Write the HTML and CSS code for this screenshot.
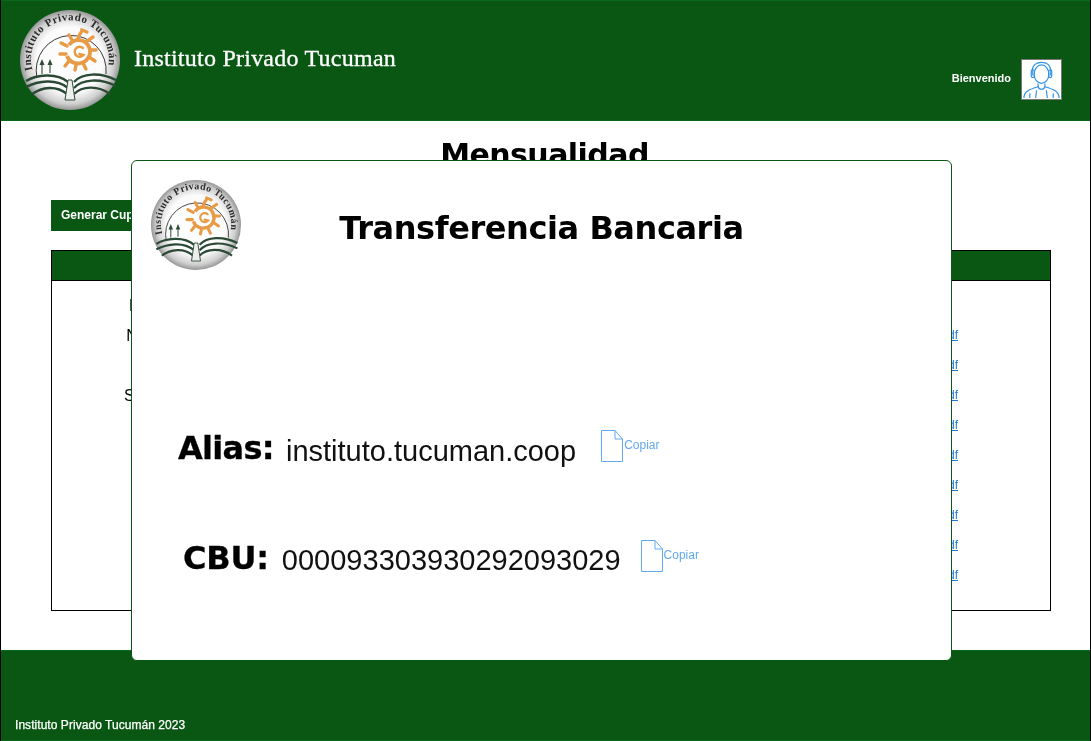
FILE: index.html
```html
<!DOCTYPE html>
<html lang="es">
<head>
<meta charset="utf-8">
<title>Instituto Privado Tucuman</title>
<link rel="stylesheet" href="styles.css">
</head>
<body>
<svg class="defs" width="0" height="0" aria-hidden="true">
  <defs>
    <radialGradient id="disk" cx="50%" cy="50%" r="50%">
      <stop offset="0" stop-color="#ffffff"/>
      <stop offset="0.66" stop-color="#fbfbfb"/>
      <stop offset="0.88" stop-color="#cfcfcf"/>
      <stop offset="1" stop-color="#969696"/>
    </radialGradient>
    <path id="arc" d="M12.500 60 A39 39 0 1 1 88 58"/>
    <symbol id="logo" viewBox="0 0 100 100">
      <circle cx="50" cy="50" r="50" fill="url(#disk)"/>
      <path d="M17 68 A35 35 0 1 1 86 64" fill="none" stroke="#222" stroke-width="0.9"/>
      <text class="logo-text"><textPath href="#arc" startOffset="0" textLength="139" lengthAdjust="spacing">Instituto Privado  Tucumán</textPath></text>
      <g fill="none" stroke="#e89a45">
        <path stroke-width="2.400" stroke-linecap="round" d="M63 38 A5 5 0 1 0 63.500 45 L59.500 44"/>
        <path stroke-width="3.800" d="M49 35 A11.500 11.500 0 0 1 69 37 A11.500 11.500 0 0 1 61 53 A11.500 11.500 0 0 1 47 46"/>
        <path stroke-width="3.400" stroke-linecap="round" d="M52 30 L49 25 M58 29 C58 24 61 25 62 20 L67 22 M66 32 L73 27 M70 40 L76 40 M69 47 L75 51 M63 53 L66 59 M56 55 L55 60 M49 51 L45 56 M46 44 L40 44 M47 36 L41 33"/>
      </g>
      <g fill="#2f4a36" stroke="#2f4a36">
        <path fill="none" stroke-width="1.100" d="M22 64 V54 M30 63 V54"/>
        <path stroke="none" d="M22 49 L24.500 55 H19.500 Z M30 49 L32.500 55 H27.500 Z"/>
      </g>
      <g fill="none" stroke="#2b4a35" stroke-width="2.400">
        <path d="M6 71 C16 65 36 62 48 72"/>
        <path d="M6 77 C18 71 36 68 48 78"/>
        <path d="M12 84 C22 77 36 75 47 84"/>
        <path d="M54 72 C62 63 80 62 96 70"/>
        <path d="M54 78 C62 69 80 68 96 76"/>
        <path d="M54 84 C62 76 78 75 90 84"/>
      </g>
      <path d="M48 70 L45 90 H55 L52 70 Z" fill="#eeeeee" stroke="#2b4a35" stroke-width="1"/>
    </symbol>
    <symbol id="file" viewBox="0 0 22 32">
      <path d="M.5 .5 H14 L21.500 9 V31.500 H.5 Z M14 .5 V9 H21.500" fill="none" stroke="#62a9ee" stroke-width="1"/>
    </symbol>
  </defs>
</svg>

<div class="page">
  <header class="top">
    <div class="brand">
      <svg class="logo-main"><use href="#logo"/></svg>
      <span class="brand-name">Instituto Privado Tucuman</span>
    </div>
    <div class="user">
      <span class="welcome">Bienvenido</span>
      <span class="avatar">
        <svg viewBox="0 0 40 40" width="39" height="39" fill="none" stroke="#2f92e6" stroke-width="1.200">
          <ellipse cx="20" cy="14.500" rx="7.500" ry="9.500"/>
          <path d="M10.500 16 V11 C10.500 5 15 2.500 20 2.500 S29.500 5 29.500 11 V16"/>
          <rect x="9.500" y="10" width="3" height="8" rx="1.500"/>
          <rect x="27.500" y="10" width="3" height="8" rx="1.500"/>
          <path d="M16.500 24 V27 C17 31 23 31 23.500 27 V24"/>
          <path d="M2 39 C2 32 8 30 16.500 27.500 M38 39 C38 32 32 30 23.500 27.500"/>
          <path d="M8 39 V34 M32 39 V34 M15 31 L14 39 M25 31 L26 39"/>
        </svg>
      </span>
    </div>
  </header>

  <main class="content">
    <h1 class="page-title">Mensualidad</h1>
    <div class="actions"><button class="btn" type="button">Generar Cupón de Pago</button></div>
    <section class="table">
      <div class="thead"><span class="th-month">Mes</span></div>
      <div class="tbody">
        <div class="row"><span class="month">Diciembre</span></div>
        <div class="row"><span class="month">Noviembre</span><a class="pdf" href="#">cupon.pdf</a></div>
        <div class="row"><span class="month">Octubre</span><a class="pdf" href="#">cupon.pdf</a></div>
        <div class="row"><span class="month">Septiembre</span><a class="pdf" href="#">cupon.pdf</a></div>
        <div class="row"><span class="month">Agosto</span><a class="pdf" href="#">cupon.pdf</a></div>
        <div class="row"><span class="month">Julio</span><a class="pdf" href="#">cupon.pdf</a></div>
        <div class="row"><span class="month">Junio</span><a class="pdf" href="#">cupon.pdf</a></div>
        <div class="row"><span class="month">Mayo</span><a class="pdf" href="#">cupon.pdf</a></div>
        <div class="row"><span class="month">Abril</span><a class="pdf" href="#">cupon.pdf</a></div>
        <div class="row"><span class="month">Marzo</span><a class="pdf" href="#">cupon.pdf</a></div>
      </div>
    </section>
  </main>

  <footer class="bottom">
    <span class="copyright">Instituto Privado Tucumán 2023</span>
  </footer>

  <div class="modal">
    <div class="modal-head">
      <svg class="logo-modal"><use href="#logo"/></svg>
      <h2 class="modal-title">Transferencia Bancaria</h2>
    </div>
    <div class="pay-row pay-alias">
      <b class="pay-label">Alias:</b>
      <span class="pay-value">instituto.tucuman.coop</span>
      <a class="copy" href="#"><svg class="file-icon"><use href="#file"/></svg><span class="copy-text">Copiar</span></a>
    </div>
    <div class="pay-row pay-cbu">
      <b class="pay-label">CBU:</b>
      <span class="pay-value">000093303930292093029</span>
      <a class="copy" href="#"><svg class="file-icon"><use href="#file"/></svg><span class="copy-text">Copiar</span></a>
    </div>
  </div>
</div>
</body>
</html>
```
FILE: styles.css
```css
* { box-sizing: border-box; }
html, body { margin: 0; padding: 0; }
body { font-family: "Liberation Sans", Arial, sans-serif; background: #fff; color: #000; }
.defs { position: absolute; }
.logo-text { font-family: "Liberation Serif", serif; font-weight: bold; font-size: 11px; fill: #2a2a2a; }

.page { position: relative; width: 1091px; height: 741px; display: flex; flex-direction: column; overflow: hidden; border-left: 1px solid #000; border-right: 1px solid #000; will-change: transform; }

.top { height: 121px; margin: 0 -1px; flex: none; background: #0a5714; border: 1px solid #0a6a1c; display: flex; justify-content: space-between; }
.brand { display: flex; align-items: flex-start; padding: 9px 0 0 19px; }
.logo-main { width: 100px; height: 100px; }
.brand-name { font-family: "Liberation Serif", serif; font-size: 24px; letter-spacing: 0.24px; color: #fff; margin: 34px 0 0 14px; line-height: 28px; -webkit-text-stroke: 0.3px #fff; }
.user { display: flex; align-items: flex-start; padding: 58px 28px 0 0; }
.welcome { font-size: 11px; font-weight: bold; color: #fff; margin: 12px 10px 0 0; line-height: 14px; }
.avatar { width: 41px; height: 41px; background: #fff; border: 1px solid #777; display: block; }
.avatar svg { display: block; }

.content { flex: 1; padding: 0 39px 0 50px; display: flex; flex-direction: column; }
.page-title { margin: 16px 0 0 -13px; font-family: "DejaVu Sans", Verdana, sans-serif; font-size: 30px; line-height: 36px; text-align: center; font-weight: bold; letter-spacing: -0.55px; }
.actions { margin-top: 27px; height: 31px; }
.btn { height: 31px; padding: 0 10px 2px; background: #0a5714; border: 0; color: #fff; font: bold 12px "Liberation Sans", Arial, sans-serif; }
.table { margin-top: 19px; height: 361px; border: 1px solid #000; display: flex; flex-direction: column; }
.thead { height: 30px; flex: none; background: #0a5714; border-bottom: 1px solid #000; display: grid; grid-template-columns: 226px; }
.th-month { color: #fff; font-weight: bold; text-align: center; line-height: 29px; }
.tbody { padding-top: 10px; }
.row { height: 30px; display: grid; grid-template-columns: 226px 1fr; align-items: center; }
.month { font-size: 16px; text-align: center; grid-column: 1; }
.pdf { grid-column: 2; justify-self: end; margin: 0 92px 2px 0; font-size: 12px; color: #1f7ad6; text-decoration: underline; }

.bottom { height: 91px; margin: 0 -1px; flex: none; background: #0a5714; border: 1px solid #0a6a1c; display: flex; align-items: flex-end; padding: 0 0 8px 14px; }
.copyright { font-size: 12px; letter-spacing: 0.05px; -webkit-text-stroke: 0.25px #fff; color: #fff; line-height: 14px; }

.modal { position: absolute; left: 130px; top: 160px; width: 821px; height: 501px; background: #fff; border: 1px solid #0a5714; border-radius: 6px; }
.modal-head { display: flex; align-items: flex-start; padding: 19px 0 0 19px; height: 270px; position: relative; }
.logo-modal { width: 90px; height: 90px; }
.modal-title { position: absolute; left: 0; right: 0; top: 46px; margin: 0; text-align: center; font-family: "DejaVu Sans", Verdana, sans-serif; font-size: 32px; line-height: 42px; font-weight: bold; letter-spacing: -0.43px; }
.pay-row { display: flex; align-items: flex-start; height: 110px; }
.pay-alias { padding: 0 0 0 46px; }
.pay-cbu { padding: 0 0 0 51px; }
.pay-label { font-family: "DejaVu Sans", Verdana, sans-serif; font-size: 32px; font-weight: bold; line-height: 40px; margin-top: -3px; -webkit-text-stroke: 0.3px #000; }
.pay-alias .pay-label { margin-right: 12px; letter-spacing: -0.7px; }
.pay-cbu .pay-label { margin-right: 13px; letter-spacing: -0.2px; }
.pay-value { font-size: 29px; line-height: 36px; color: #111; }
.pay-alias .pay-value { margin-top: 2px; }
.pay-cbu .pay-value { margin-top: 1px; }
.copy { display: flex; align-items: flex-start; color: #62a9ee; text-decoration: none; margin-left: 25px; margin-top: -1px; }
.pay-cbu .copy { margin-left: 20px; }
.file-icon { width: 22px; height: 32px; }
.copy-text { font-size: 12px; line-height: 14px; margin: 8px 0 0 1px; }
```
